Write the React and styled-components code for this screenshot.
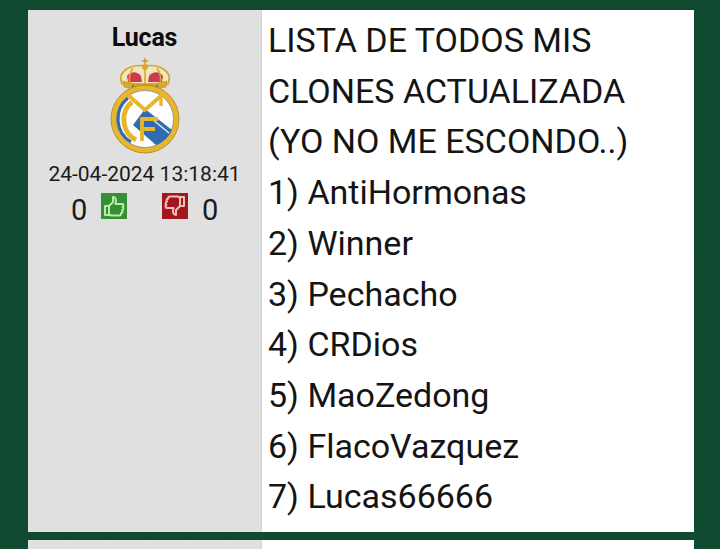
import React from "react";
import styled, { createGlobalStyle } from "styled-components";

const Global = createGlobalStyle`
  html, body { margin: 0; padding: 0; background: #0f4a30; height: 549px; overflow: hidden; }
  body { font-family: Roboto, "Liberation Sans", sans-serif; color: #111; }
`;
const Page = styled.div`
  width: 720px; height: 549px; overflow: hidden; box-sizing: border-box;
  padding: 10px 26px 0 28px; display: flex; flex-direction: column; gap: 8px;
  background-color: #0f4a30;
  background-image:
    repeating-linear-gradient(0deg, rgba(255,255,255,.008) 0 2px, transparent 2px 4px),
    repeating-linear-gradient(90deg, rgba(0,0,0,.014) 0 2px, transparent 2px 5px);
`;
const Post = styled.article`
  display: grid; grid-template-columns: 234px 1fr; background: #fff; flex: none;
  height: ${p => p.$h}px;
`;
const Side = styled.aside`
  background: #e0e0e0; border-right: 1px solid #d2d2d2;
  display: flex; flex-direction: column; align-items: center; padding-top: 15px;
`;
const Name = styled.div`font-size: 25px; font-weight: 700; line-height: 26px; color: #0c0c0c; letter-spacing: -0.2px;`;
const Crest = styled.svg`width: 72px; height: 98px; margin-top: 6px; display: block;`;
const DateText = styled.div`font-size: 21px; line-height: 26px; margin-top: 6px; color: #1a1a1a;`;
const Votes = styled.div`display: flex; align-items: center; margin-top: 7px; height: 32px; font-size: 29px; color: #1a1a1a;`;
const Count = styled.span`width: 16px; text-align: center;`;
const Vote = styled.svg`width: 26px; height: 26px; display: block; margin: ${p => p.$m}; position: relative; top: -4px;`;
const Body = styled.div`padding: 5px 0 0 6px; font-size: 34px; line-height: 50.7px; color: #141414;`;
const Line = styled.div`white-space: nowrap;`;

const lines = ["LISTA DE TODOS MIS","CLONES ACTUALIZADA","(YO NO ME ESCONDO..)","1) AntiHormonas","2) Winner","3) Pechacho","4) CRDios","5) MaoZedong","6) FlacoVazquez","7) Lucas66666"];

function RealCrest() {
  return (
    <Crest viewBox="0 0 72 98">
      <path d="M13 27 C7 13 24 7 36 9 C48 7 65 13 59 27 Z" fill="#efe6c4" stroke="#d4a62a" strokeWidth="1.6"/>
      <path d="M18 19 C22 14 28 14 32 19 L33 25 L19 25 Z M40 19 C44 14 50 14 54 19 L53 25 L39 25 Z" fill="#cf3a4a"/>
      <path d="M36 1 V8 M33 4 H39" stroke="#c79a20" strokeWidth="1.5"/>
      <circle cx="36" cy="10" r="3" fill="#d9a92a"/>
      <path d="M36 10 V27 M24 11 Q19 18 21 27 M48 11 Q53 18 51 27" stroke="#d9a92a" strokeWidth="1.6" fill="none"/>
      <path d="M14 24 Q36 31 58 24 L57 30 Q36 36 15 30 Z" fill="#d9a92a" stroke="#b6851a" strokeWidth=".5"/>
      <g fill="#4f64a8"><circle cx="24" cy="29" r="1.1"/><circle cx="36" cy="31" r="1.1"/><circle cx="48" cy="29" r="1.1"/></g>
      <circle cx="36" cy="62" r="34" fill="#e8b62c" stroke="#a98428" strokeWidth=".8"/>
      <circle cx="36" cy="62" r="28.500" fill="#fff" stroke="#7e8794" strokeWidth=".8"/>
      <path d="M36 52 L63 73 A28 28 0 0 1 47 88 L24 68 Z" fill="#2f6bb0"/>
      <path d="M43 62 L60 76" stroke="#dce8f4" strokeWidth="1.6"/>
      <path d="M22 85 A27 27 0 0 1 19 41" fill="none" stroke="#2f6bb0" strokeWidth="3"/>
      <path d="M23 45 C11 54 12 75 27 83" fill="none" stroke="#e8b62c" strokeWidth="5"/>
      <path d="M19 38 L36 53 L53 38" fill="none" stroke="#e8b62c" strokeWidth="3.8"/>
      <path d="M52 38 V49" stroke="#e8b62c" strokeWidth="3.4"/>
      <path d="M33 84 V62 H49 M33 72 H46" fill="none" stroke="#e8b62c" strokeWidth="3.8"/>
    </Crest>
  );
}
function Up() {
  return (
    <Vote viewBox="0 0 26 26" $m="0 0 0 14px">
      <rect width="26" height="26" fill="#378f33"/>
      <path d="M4 13 H8 V22 H4 Z M8 13 L12 9 V4 C15 4 15.500 7 14.500 11 H21 C23 11 23 13.500 21.500 14 C23 15 22.500 17 21 17.300 C22 18.500 21.500 20 20 20.300 C20 22 19 22.500 18 22.500 H10 L8 21" fill="none" stroke="#b5ecae" strokeWidth="2" strokeLinejoin="round"/>
    </Vote>
  );
}
function Down() {
  return (
    <Vote viewBox="0 0 26 26" $m="0 14px 0 35px">
      <rect width="26" height="26" fill="#a3161e"/>
      <path d="M22 4 H18 V13 H22 Z M18 13 L14 17 V22 C11 22 10.500 19 11.500 15 H5 C3 15 3 12.500 4.500 12 C3 11 3.500 9 5 8.700 C4 7.500 4.500 6 6 5.700 C6 4 7 3.500 8 3.500 H16 L18 5" fill="none" stroke="#f1bfbb" strokeWidth="2" strokeLinejoin="round"/>
    </Vote>
  );
}

export default function App() {
  return (
    <Page>
      <Global />
      <Post $h={522}>
        <Side>
          <Name>Lucas</Name>
          <RealCrest />
          <DateText>24-04-2024 13:18:41</DateText>
          <Votes>
            <Count>0</Count>
            <Up />
            <Down />
            <Count>0</Count>
          </Votes>
        </Side>
        <Body>{lines.map(l => <Line key={l}>{l}</Line>)}</Body>
      </Post>
      <Post $h={40}><Side /><div /></Post>
    </Page>
  );
}
